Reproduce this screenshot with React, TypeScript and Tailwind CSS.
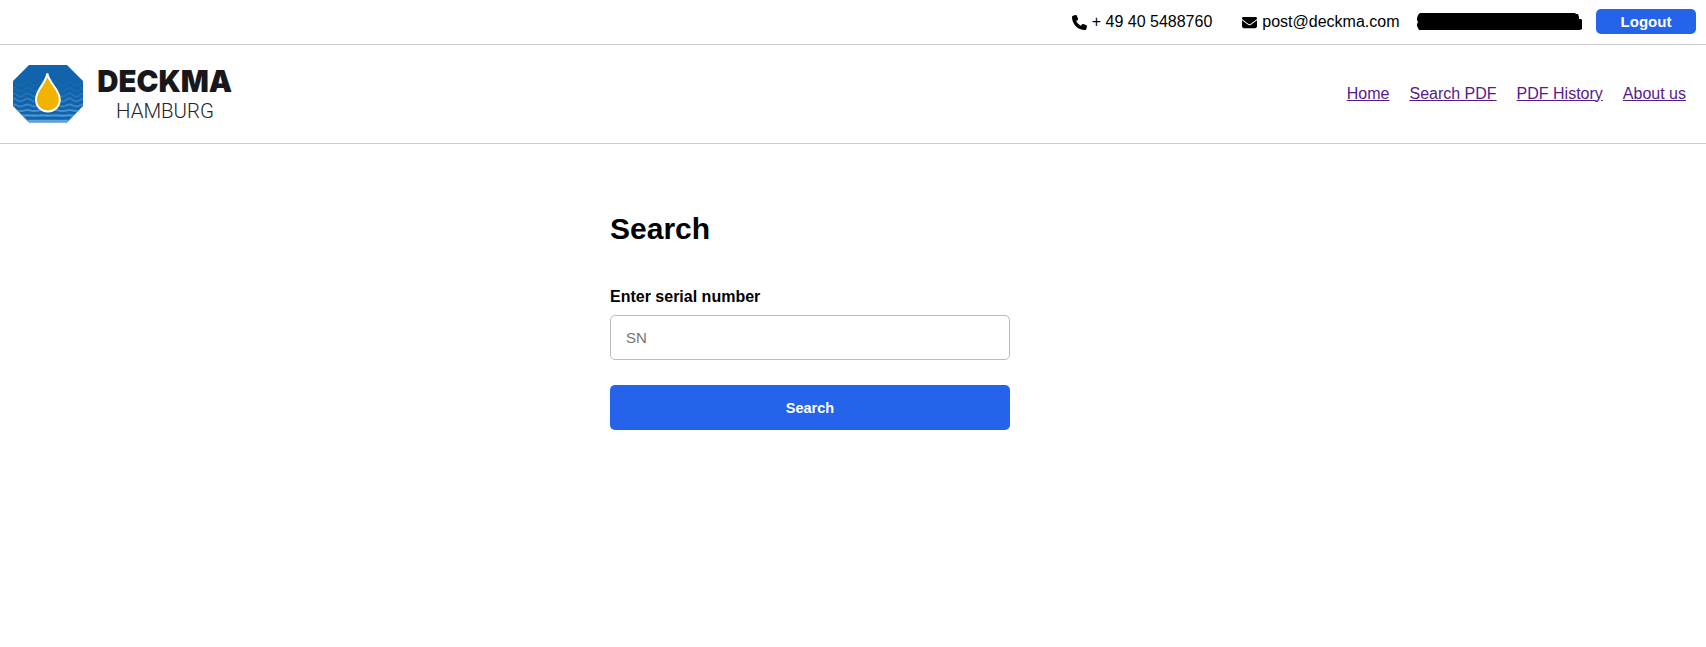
import type { FormEvent } from "react";
import { FaEnvelope, FaPhone } from "react-icons/fa6";

type NavItem = {
  label: string;
  href: string;
};

const NAV_ITEMS: NavItem[] = [
  { label: "Home", href: "#home" },
  { label: "Search PDF", href: "#search" },
  { label: "PDF History", href: "#history" },
  { label: "About us", href: "#about" },
];

// The water calms down and gets lighter towards the bottom of the badge.
const WAVES = [
  { y: 19, bend: 3.6, color: "#176aa9", width: 1.3 },
  { y: 24.5, bend: 3.6, color: "#1d6dad", width: 1.4 },
  { y: 30, bend: 3.4, color: "#2875b6", width: 1.6 },
  { y: 35, bend: 3, color: "#327ebe", width: 1.8 },
  { y: 40.5, bend: 2, color: "#3c87c7", width: 1.9 },
  { y: 45.5, bend: 1.2, color: "#468fce", width: 2 },
  { y: 50.5, bend: 0.4, color: "#4e97d3", width: 2.2 },
  { y: 56, bend: 0, color: "#5ca4dc", width: 2.6 },
];

function Logo() {
  return (
    <svg width="222" height="58" viewBox="0 0 222 58" role="img" aria-label="DECKMA Hamburg" className="overflow-visible">
      <defs>
        <clipPath id="logo-badge">
          <path d="M16 0H54L70 16V41L54 57.5H16L0 41V16Z" />
        </clipPath>
      </defs>
      <g clipPath="url(#logo-badge)">
        <rect width="70" height="58" fill="#1164ac" />
        {WAVES.map((wave) => (
          <path
            key={wave.y}
            d={`M-3 ${wave.y}q3.5 ${-wave.bend} 7 0t7 0t7 0t7 0t7 0t7 0t7 0t7 0t7 0t7 0t7 0`}
            fill="none"
            stroke={wave.color}
            strokeWidth={wave.width}
          />
        ))}
      </g>
      <path
        d="M34.3 8.5C36 18.5 46.8 24.5 46.8 34.3C46.8 41.5 41.7 46.4 34.9 46.4C28 46.4 23 41.5 23 34.3C23 24.5 33 18.5 34.3 8.5Z"
        fill="#f1b200"
        stroke="#fff"
        strokeWidth="2"
      />
      <text
        x="84.2"
        y="27.4"
        textLength="135"
        lengthAdjust="spacingAndGlyphs"
        className="fill-[#18171c] font-['Inter'] text-[30.5px] font-black"
      >
        DECKMA
      </text>
      <text
        x="103"
        y="53.2"
        textLength="98"
        lengthAdjust="spacingAndGlyphs"
        className="fill-[#242328] font-['Roboto'] text-[21px] font-light"
      >
        HAMBURG
      </text>
    </svg>
  );
}

function TopBar() {
  return (
    <div className="flex h-[45px] items-start justify-end border-b border-[#ccc] pr-2.5">
      <div className="mt-[13px] flex items-center gap-[5px] leading-[18px]">
        <FaPhone className="size-[15px]" />
        <span>+ 49 40 5488760</span>
      </div>
      <div className="mt-[13px] ml-[30px] flex items-center gap-[5px] leading-[18px]">
        <FaEnvelope className="size-[15px]" />
        <span>post@deckma.com</span>
      </div>
      <svg width="165" height="17" viewBox="0 0 165 17" className="mt-[13px] ml-[17.5px]" aria-hidden="true">
        <path d="M3 0H158L159 1H161L162 4V6H164L165 7V16L163 17H2L1 15L0 13V11L1 9L0 7V5L1 2Z" />
      </svg>
      <button
        type="button"
        className="mt-[9px] ml-3.5 h-[25px] w-[100px] cursor-pointer rounded-[5px] bg-[#2563eb] text-[15px] leading-[25px] font-bold text-white"
      >
        Logout
      </button>
    </div>
  );
}

function Header() {
  return (
    <header className="flex h-[99px] items-center justify-between border-b border-[#ccc] pr-5 pl-[13px]">
      <a href="#home" className="mb-px">
        <Logo />
      </a>
      <nav className="mt-[-1px] flex gap-5 leading-[18px]">
        {NAV_ITEMS.map((item) => (
          <a key={item.label} href={item.href} className="text-[#551a8b] underline">
            {item.label}
          </a>
        ))}
      </nav>
    </header>
  );
}

function SearchForm() {
  const handleSubmit = (event: FormEvent<HTMLFormElement>) => {
    event.preventDefault();
  };

  return (
    <form onSubmit={handleSubmit} className="mx-auto mt-[68px] flex w-[400px] flex-col">
      <h1 className="text-[30px] leading-[34px] font-bold">Search</h1>
      <label htmlFor="serial" className="mt-[42px] leading-[18px] font-bold">
        Enter serial number
      </label>
      <input
        id="serial"
        type="text"
        placeholder="SN"
        className="mt-[9px] h-[45px] rounded-[5px] border border-[#bbb] px-[15px] text-[15px] placeholder:text-[#757575]"
      />
      <button
        type="submit"
        className="mt-[25px] h-[45px] cursor-pointer rounded-[5px] bg-[#2563eb] pt-0.5 text-[14.5px] font-bold text-white"
      >
        Search
      </button>
    </form>
  );
}

export default function App() {
  return (
    <div className="min-h-screen bg-white font-['Liberation_Sans',Arial,sans-serif] text-base text-black">
      <TopBar />
      <Header />
      <main className="pr-[86px]">
        <SearchForm />
      </main>
    </div>
  );
}
